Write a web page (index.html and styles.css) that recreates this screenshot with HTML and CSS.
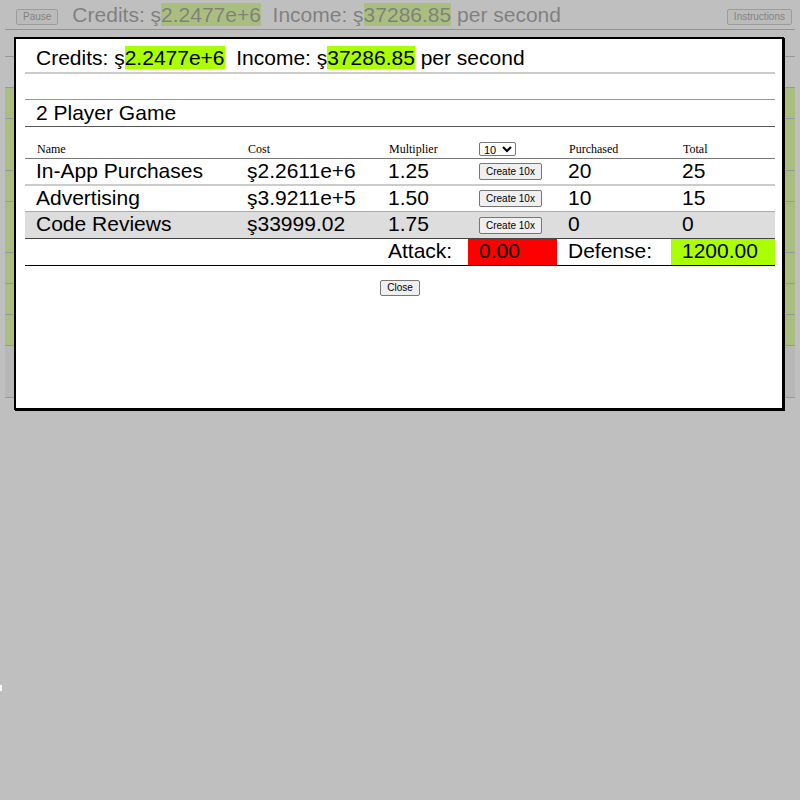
FILE: index.html
```html
<!DOCTYPE html>
<html>
<head>
<meta charset="utf-8">
<link rel="stylesheet" href="styles.css">
</head>
<body>
<div class="stage">
  <div class="page">
    <div class="topbar">
      <button class="btn bg-btn pause">Pause</button>
      <div class="status bg-status">Credits: ş<span class="hl">2.2477e+6</span>&nbsp; Income: ş<span class="hl">37286.85</span> per second</div>
      <button class="btn bg-btn instr">Instructions</button>
    </div>
    <div class="bg-rows">
      <div class="bg-row r1"></div>
      <div class="bg-row r2"></div>
      <div class="bg-row green r3"></div>
      <div class="bg-row green r4"></div>
      <div class="bg-row green r5"></div>
      <div class="bg-row green r6"></div>
      <div class="bg-row green r7"></div>
      <div class="bg-row green r8"></div>
      <div class="bg-row green r9"></div>
      <div class="bg-row grey r10"></div>
    </div>
  </div>

  <div class="overlay"></div>

  <div class="modal">
    <div class="modal-body">
      <div class="status status-row">Credits: ş<span class="hl">2.2477e+6</span>&nbsp; Income: ş<span class="hl">37286.85</span> per second</div>
      <div class="blank-row"></div>
      <div class="title-row">2 Player Game</div>
      <table class="game">
        <colgroup>
          <col class="c-name">
          <col class="c-cost">
          <col class="c-mult">
          <col class="c-act">
          <col class="c-purch">
          <col class="c-total">
        </colgroup>
        <thead>
          <tr>
            <th>Name</th>
            <th>Cost</th>
            <th>Multiplier</th>
            <th class="sel-cell"><select class="qty"><option>10</option><option>1</option><option>100</option></select></th>
            <th>Purchased</th>
            <th>Total</th>
          </tr>
        </thead>
        <tbody>
          <tr class="row-a">
            <td>In-App Purchases</td>
            <td>ş2.2611e+6</td>
            <td>1.25</td>
            <td class="btn-cell"><button class="btn create">Create 10x</button></td>
            <td>20</td>
            <td>25</td>
          </tr>
          <tr class="row-b">
            <td>Advertising</td>
            <td>ş3.9211e+5</td>
            <td>1.50</td>
            <td class="btn-cell"><button class="btn create">Create 10x</button></td>
            <td>10</td>
            <td>15</td>
          </tr>
          <tr class="row-c">
            <td>Code Reviews</td>
            <td>ş33999.02</td>
            <td>1.75</td>
            <td class="btn-cell"><button class="btn create">Create 10x</button></td>
            <td>0</td>
            <td>0</td>
          </tr>
          <tr class="row-total">
            <td></td>
            <td></td>
            <td>Attack:</td>
            <td class="attack">0.00</td>
            <td>Defense:</td>
            <td class="defense">1200.00</td>
          </tr>
        </tbody>
      </table>
      <div class="actions"><button class="btn close">Close</button></div>
    </div>
  </div>

  <div class="mark"></div>
</div>
</body>
</html>
```
FILE: styles.css
```css
html, body {
  margin: 0;
  padding: 0;
}

body {
  font-family: "Liberation Sans", Arial, sans-serif;
  color: #000;
  background: #fff;
}

.stage {
  position: relative;
  width: 800px;
  height: 800px;
  overflow: hidden;
  background: #fff;
}

/* ---------- underlying page ---------- */
.page {
  padding: 0 5px;
}

.topbar {
  display: flex;
  align-items: flex-start;
  height: 29px;
  border-bottom: 1px solid #555;
}

.status {
  font-size: 21px;
  line-height: 24px;
  white-space: nowrap;
}

.hl {
  background: #aaff00;
}

.bg-status {
  margin-top: 3px;
  margin-left: 14px;
}

.btn {
  font-family: "Liberation Sans", Arial, sans-serif;
  font-size: 10px;
  color: #000;
  background: #efefef;
  border: 1px solid #767676;
  border-radius: 2px;
  padding: 0 6px;
  margin: 0;
}

.bg-btn {
  height: 16px;
  line-height: 14px;
  margin-top: 9px;
}

.pause {
  margin-left: 11px;
}

.instr {
  margin-left: auto;
  margin-right: 3px;
}

.bg-rows {
  display: flex;
  flex-direction: column;
}

.bg-row {
  border-bottom: 1px solid #666;
}

.bg-row.green { background: #aaff00; }
.bg-row.grey { background: #dddddd; }

.r1 { height: 26px; }
.r2 { height: 30px; }
.r3 { height: 30px; }
.r4 { height: 51px; }
.r5 { height: 30px; }
.r6 { height: 50px; }
.r7 { height: 30px; }
.r8 { height: 30px; }
.r9 { height: 30px; }
.r10 { height: 51px; }

.overlay {
  position: absolute;
  inset: 0;
  background: rgba(170, 170, 170, 0.75);
}

.mark {
  position: absolute;
  left: 0;
  top: 685px;
  width: 2px;
  height: 6px;
  background: #fff;
}

/* ---------- modal ---------- */
.modal {
  position: absolute;
  left: 14px;
  top: 37px;
  width: 770px;
  height: 373px;
  box-sizing: border-box;
  border: 2px solid #000;
  box-shadow: 1px 1px 0 #000;
  background: #fff;
}

.modal-body {
  width: 750px;
  margin-left: 9px;
}

.status-row {
  padding: 7px 0 2px 11px;
  border-bottom: 2px solid #cccccc;
}

.blank-row {
  height: 25px;
  border-bottom: 1px solid #999;
}

.title-row {
  font-size: 21px;
  line-height: 24px;
  padding: 1px 0 1px 11px;
  border-bottom: 1px solid #555;
}

.game {
  width: 750px;
  table-layout: fixed;
  border-collapse: collapse;
  margin-top: 14px;
}

.c-name { width: 211px; }
.c-cost { width: 141px; }
.c-mult { width: 91px; }
.c-act { width: 89px; }
.c-purch { width: 114px; }
.c-total { width: 104px; }

.game th {
  font-family: "Liberation Serif", "Times New Roman", serif;
  font-size: 12px;
  font-weight: normal;
  text-align: left;
  vertical-align: bottom;
  height: 15px;
  line-height: 14px;
  padding: 0 0 2px 12px;
  border-bottom: 1px solid #777;
}

.game th.sel-cell {
  padding-left: 11px;
}

.qty {
  display: block;
  font-family: "Liberation Sans", Arial, sans-serif;
  font-size: 11px;
  width: 37px;
  height: 14px;
  padding: 0;
  margin: 0;
  border: 1px solid #767676;
  border-radius: 2px;
  background: #fff;
  color: #000;
}

.game td {
  font-size: 21px;
  line-height: 24px;
  padding: 0 0 1px 11px;
  vertical-align: top;
  white-space: nowrap;
}

.row-a td { border-bottom: 2px solid #cccccc; }
.row-b td { border-bottom: 1px solid #aaaaaa; }
.row-c td { border-bottom: 1px solid #444; background: #dddddd; padding-bottom: 2px; }
.row-total td { border-bottom: 1px solid #000; padding-bottom: 2px; }

.game td.attack { background: #ff0000; }
.game td.defense { background: #aaff00; }

.game td.btn-cell {
  line-height: 17px;
  vertical-align: middle;
  padding-bottom: 0;
}

.create {
  display: block;
  height: 17px;
  line-height: 15px;
}

.actions {
  display: flex;
  justify-content: center;
  margin-top: 14px;
}

.close {
  height: 16px;
  line-height: 14px;
}
```
